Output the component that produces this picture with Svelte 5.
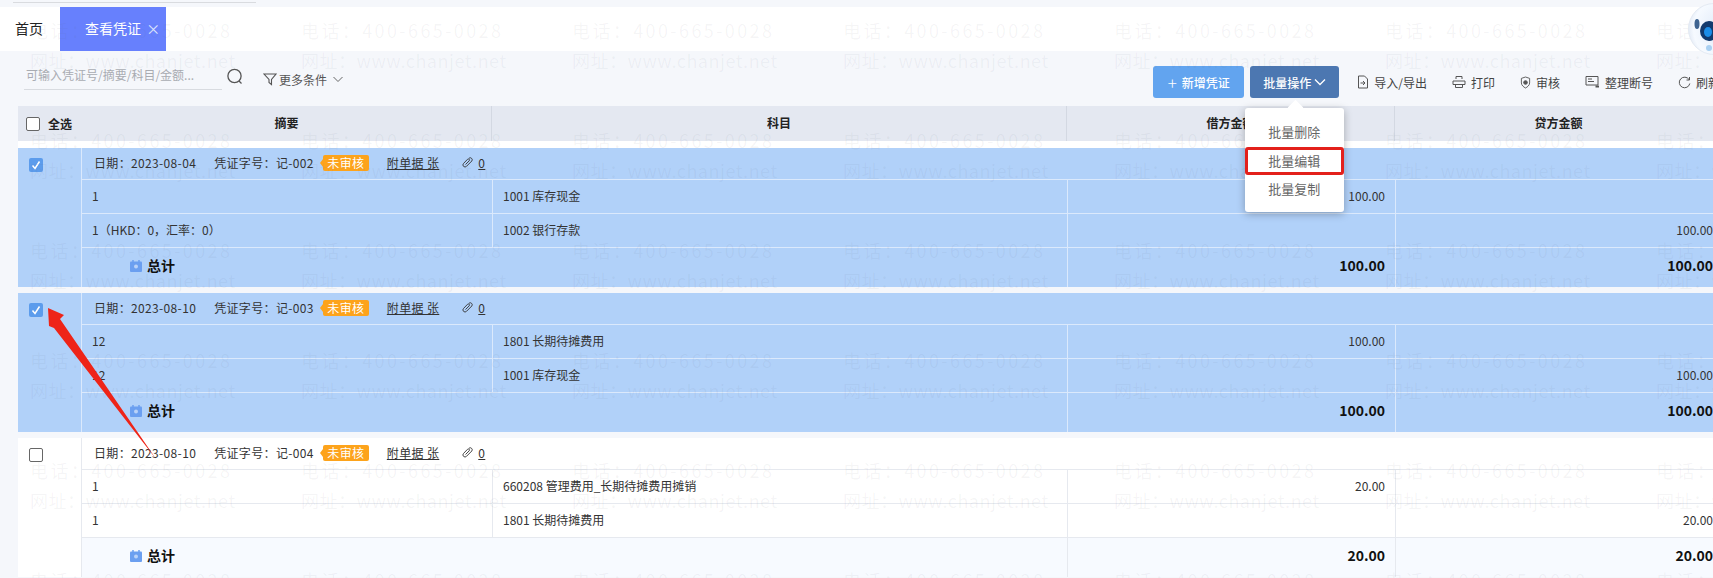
<script>
  const vouchers = [
    {
      date: '2023-08-04', no: '记-002', selected: true, total: '100.00',
      rows: [
        { memo: '1', account: '1001 库存现金', debit: '100.00', credit: '' },
        { memo: '1（HKD：0，汇率：0）', account: '1002 银行存款', debit: '', credit: '100.00' }
      ]
    },
    {
      date: '2023-08-10', no: '记-003', selected: true, total: '100.00',
      rows: [
        { memo: '12', account: '1801 长期待摊费用', debit: '100.00', credit: '' },
        { memo: '12', account: '1001 库存现金', debit: '', credit: '100.00' }
      ]
    },
    {
      date: '2023-08-10', no: '记-004', selected: false, total: '20.00',
      rows: [
        { memo: '1', account: '660208 管理费用_长期待摊费用摊销', debit: '20.00', credit: '' },
        { memo: '1', account: '1801 长期待摊费用', debit: '', credit: '20.00' }
      ]
    }
  ];

  const marks = Array.from({ length: 42 });
</script>

<div class="page">
  <div class="topstrip"><span class="topline"></span></div>

  <nav class="tabs">
    <span class="home">首页</span>
    <span class="tab-on">查看凭证 <i>×</i></span>
  </nav>

  <div class="toolbar">
    <div class="filters">
      <span class="search">可输入凭证号/摘要/科目/金额...</span>
      <svg class="search-icon" width="18" height="18" viewBox="0 0 18 18" fill="none" stroke="#555" stroke-width="1.3">
        <circle cx="8.5" cy="8" r="6.6" />
        <path d="M13 13l2.5 2.5" />
      </svg>
      <span class="more">
        <svg width="14" height="14" viewBox="0 0 14 14" fill="none" stroke="#555" stroke-width="1.1">
          <path d="M1 2h12L8.5 7.5V12.5L6 10.5V7.5z" />
        </svg>
        更多条件
        <svg class="chev" width="12" height="12" viewBox="0 0 12 12" fill="none" stroke="#666" stroke-width="1">
          <path d="M1.5 4l4.5 4.5L10.5 4" />
        </svg>
      </span>
    </div>

    <div class="actions">
      <button class="btn add"><span class="plus">+</span>新增凭证</button>
      <div class="batch">
        <button class="btn bulk">
          批量操作
          <svg width="12" height="12" viewBox="0 0 12 12" fill="none" stroke="#fff" stroke-width="1.3">
            <path d="M1 3.5l5 5 5-5" />
          </svg>
        </button>
        <div class="menu">
          <div class="menu-item">批量删除</div>
          <div class="menu-item marked">批量编辑</div>
          <div class="menu-item">批量复制</div>
        </div>
      </div>
      <span class="tool">
        <svg width="12" height="14" viewBox="0 0 12 14" fill="none" stroke="#555">
          <path d="M7.5 1H1.5v12h9V4z" /><path d="M3.5 8h4M6 6l2 2-2 2" />
        </svg>
        导入/导出
      </span>
      <span class="tool">
        <svg width="14" height="14" viewBox="0 0 14 14" fill="none" stroke="#555">
          <path d="M4 4V1.5h6V4M1 6h12v3.5H1zM3.5 9.5v3h7v-3" />
        </svg>
        打印
      </span>
      <span class="tool">
        <svg width="11" height="13" viewBox="0 0 12 14" fill="none" stroke="#555">
          <path d="M6 1l4.500 1.500v5C10.500 10 8 12 6 13 4 12 1.500 10 1.500 7.500v-5z" />
          <circle cx="6" cy="7" r="2" fill="#555" />
        </svg>
        审核
      </span>
      <span class="tool">
        <svg width="15" height="14" viewBox="0 0 15 14" fill="none" stroke="#555">
          <path d="M1 1.500h12v8.500H1zM3 4h4M3 6.500h6" /><path d="M10.500 11.500h3.500" stroke-width="2" />
        </svg>
        整理断号
      </span>
      <span class="tool">
        <svg width="13" height="13" viewBox="0 0 13 13" fill="none" stroke="#555">
          <path d="M11 3.500A5.300 5.300 0 1 0 11.800 7.500" /><path d="M11.500 1v3h-3" />
        </svg>
        刷新
      </span>
    </div>
  </div>

  <div class="table-head cols">
    <div class="all"><span class="check"></span>全选</div>
    <div class="th split">摘要</div>
    <div class="th split">科目</div>
    <div class="th split">借方金额</div>
    <div class="th">贷方金额</div>
  </div>

  <div class="list">
    {#each vouchers as v}
      <section class="voucher" class:selected={v.selected}>
        <div class="side">
          <span class="check" class:on={v.selected}>
            {#if v.selected}
              <svg width="14" height="14" viewBox="0 0 14 14" fill="none" stroke="#fff" stroke-width="1.500">
                <path d="M3.500 7.500l2.500 3 4.500-7" />
              </svg>
            {/if}
          </span>
        </div>
        <div class="body">
          <div class="meta">
            <span class="date">日期：{v.date}</span>
            <span class="no">凭证字号：{v.no}</span>
            <span class="badge">未审核</span>
            <span class="attach">附单据 张</span>
            <svg class="clip" width="11" height="11" viewBox="0 0 11 11" fill="none" stroke="#333" stroke-width="0.900">
              <path d="M7 1.200a2 2 0 0 1 2.800 2.800L4.500 9.300a2 2 0 0 1-3-2.800l4-4.200a1.100 1.100 0 0 1 1.700 1.500L3.500 7.500" />
            </svg>
            <span class="count">0</span>
          </div>
          {#each v.rows as r}
            <div class="row cols-body">
              <div class="cell">{r.memo}</div>
              <div class="cell">{r.account}</div>
              <div class="cell num">{r.debit}</div>
              <div class="cell num">{r.credit}</div>
            </div>
          {/each}
          <div class="row total cols-body">
            <div class="cell sum">
              <svg width="12" height="12" viewBox="0 0 12 12">
                <rect x="0" y="1.500" width="12" height="10.500" rx="1" fill="#6b9ff0" />
                <path d="M3 0v3M9 0v3" stroke="#6b9ff0" stroke-width="1.500" />
                <circle cx="6" cy="6.500" r="2" fill="#b9d2f8" />
              </svg>
              总计
            </div>
            <div class="cell"></div>
            <div class="cell num strong">{v.total}</div>
            <div class="cell num strong">{v.total}</div>
          </div>
        </div>
      </section>
    {/each}
  </div>

  <div class="watermark">
    {#each marks as _}
      <div class="mark">
        <span class="tel">电话：400-665-0028</span>
        <span>网址：www.chanjet.net</span>
      </div>
    {/each}
  </div>

  <svg class="robot" width="26" height="54" viewBox="0 0 26 54">
    <defs>
      <radialGradient id="glow" cx="0.7" cy="0.5" r="0.8">
        <stop offset="0" stop-color="#dce8f8" />
        <stop offset="0.75" stop-color="#f6faff" />
        <stop offset="1" stop-color="#d3deee" />
      </radialGradient>
    </defs>
    <circle cx="27" cy="27" r="25.500" fill="url(#glow)" stroke="#e4eaf3" />
    <ellipse cx="22" cy="29" rx="9" ry="10" fill="#123a6e" />
    <ellipse cx="21" cy="30" rx="4" ry="5" fill="#1b8de8" />
    <ellipse cx="10" cy="22" rx="2.500" ry="5" fill="#3f6491" />
    <circle cx="22" cy="46" r="3" fill="#a9d0f2" />
  </svg>

  <svg class="arrow" width="170" height="160" viewBox="40 305 170 160">
    <polygon points="48,308 64,315 60,319 156,459 54,328 49,326" fill="#ee2418" />
  </svg>
</div>

<style>
  :global(body) {
    margin: 0;
    background: #f5f7fb;
  }

  .page {
    position: relative;
    width: 1713px;
    height: 578px;
    overflow: hidden;
    background: #f5f7fb;
    font-family: "Noto Sans CJK SC", "Liberation Sans", sans-serif;
    font-size: 12px;
    color: #333;
  }

  .topstrip {
    height: 7px;
  }
  .topline {
    display: block;
    width: 243px;
    height: 1px;
    margin-left: 13px;
    background: #d9dbdf;
    transform: translateY(2px);
  }

  .tabs {
    display: flex;
    height: 44px;
    background: #fff;
    font-size: 14px;
  }
  .home {
    width: 60px;
    padding-left: 15px;
    box-sizing: border-box;
    line-height: 42px;
    color: #222;
  }
  .tab-on {
    width: 106px;
    padding-left: 25px;
    box-sizing: border-box;
    line-height: 42px;
    background: #6780fd;
    color: #fff;
  }
  .tab-on i {
    font-style: normal;
    margin-left: 2px;
    color: #dfe4ff;
  }

  .toolbar {
    display: flex;
    height: 55px;
  }
  .filters {
    flex: 1;
    display: flex;
    padding-left: 24px;
  }
  .search {
    width: 198px;
    height: 39px;
    box-sizing: border-box;
    padding: 15px 2px 0;
    line-height: 18px;
    border-bottom: 1px solid #d8dbe0;
    color: #a9acb2;
  }
  .search-icon {
    margin: 17px 0 0 4px;
  }
  .more {
    display: flex;
    align-items: center;
    gap: 2px;
    height: 20px;
    margin: 18px 0 0 19px;
    color: #555;
  }
  .chev {
    margin-left: 3px;
  }

  .actions {
    display: flex;
    flex: none;
    align-items: flex-start;
    padding-top: 15px;
    margin-right: -32px;
  }
  .btn {
    height: 32px;
    padding: 0;
    border: none;
    border-radius: 3px;
    color: #fff;
    font: inherit;
    font-weight: 500;
  }
  .add {
    display: flex;
    align-items: center;
    justify-content: center;
    gap: 5px;
    width: 91px;
    margin-right: 6px;
    background: #62a4ef;
  }
  .plus {
    font-size: 17px;
    font-weight: 300;
    line-height: 1;
  }
  .bulk {
    display: flex;
    align-items: center;
    justify-content: center;
    gap: 3px;
    width: 89px;
    background: #4c77b1;
  }
  .batch {
    position: relative;
    margin-right: 18px;
  }
  .menu {
    position: absolute;
    z-index: 10;
    top: 42px;
    left: -5px;
    width: 99px;
    height: 104px;
    box-sizing: border-box;
    padding-top: 10px;
    background: #fff;
    border-radius: 3px;
    box-shadow: 0 2px 8px rgba(0, 0, 0, 0.28);
    font-size: 13px;
    color: #666;
  }
  .menu::before {
    content: "";
    position: absolute;
    top: -6px;
    left: 45px;
    width: 11px;
    height: 11px;
    background: #fff;
    transform: rotate(45deg);
  }
  .menu-item {
    position: relative;
    height: 28.5px;
    line-height: 28px;
    padding-left: 23px;
  }
  .marked {
    outline: 3px solid #e3201b;
    outline-offset: -3px;
    border-radius: 3px;
  }
  .tool {
    display: flex;
    align-items: center;
    gap: 5px;
    height: 32px;
    margin-right: 25px;
    color: #444;
    white-space: nowrap;
  }

  .cols,
  .cols-body {
    display: grid;
  }
  .cols {
    grid-template-columns: 64px 410px 575px 328px 327px;
  }
  .cols-body {
    grid-template-columns: 411px 575px 328px 327px;
  }

  .table-head {
    width: 1704px;
    height: 35px;
    margin-left: 18px;
    background: #e4e8f1;
    border-bottom: 7px solid #fff;
    font-weight: 700;
    color: #222;
    line-height: 33px;
  }
  .all {
    display: flex;
    align-items: center;
    gap: 8px;
    padding-left: 8px;
  }
  .th {
    text-align: center;
  }
  .split {
    border-right: 1px solid #d3d8e2;
  }

  .voucher {
    display: grid;
    grid-template-columns: 64px 1fr;
    width: 1704px;
    margin: 0 0 6px 18px;
    background: #fff;
    --line: #e6e9ef;
  }
  .voucher.selected {
    background: #b1d1f9;
    --line: #dbe9fc;
  }
  .side {
    padding: 10px 0 0 11px;
    border-right: 1px solid var(--line);
  }
  .check {
    display: block;
    width: 14px;
    height: 14px;
    box-sizing: border-box;
    border: 1px solid #666;
    border-radius: 2px;
    background: #fff;
  }
  .check.on {
    border: none;
    background: #5c9cec;
  }
  .side .check svg {
    display: block;
  }

  .meta {
    display: flex;
    align-items: center;
    height: 29px;
    padding: 0 0 2px 12px;
    white-space: nowrap;
    letter-spacing: 0.35px;
  }
  .no {
    margin-left: 18px;
  }
  .badge {
    position: relative;
    width: 46px;
    height: 16px;
    margin-left: 9px;
    border-radius: 2px;
    background: #fda31b;
    color: #fff;
    text-align: center;
    line-height: 15px;
  }
  .badge::before {
    content: "";
    position: absolute;
    top: 4px;
    left: -3px;
    border: 4px solid transparent;
    border-left: none;
    border-right: 3px solid #fda31b;
  }
  .attach {
    margin-left: 18px;
    text-decoration: underline;
  }
  .clip {
    margin-left: 23px;
  }
  .count {
    margin-left: 5px;
    text-decoration: underline;
  }

  .row {
    height: 34px;
    box-sizing: border-box;
    border-top: 1px solid var(--line);
  }
  .cell {
    padding: 0 10px;
    line-height: 32px;
    border-right: 1px solid var(--line);
  }
  .cell:last-child {
    border-right: none;
  }
  .num {
    text-align: right;
  }
  .total {
    height: 40px;
    color: #111;
  }
  .voucher:not(.selected) .total {
    background: #f7faff;
  }
  .total .cell {
    line-height: 35px;
  }
  .total .sum {
    border-right-color: transparent;
  }
  .sum {
    display: flex;
    align-items: center;
    gap: 5px;
    height: 35px;
    padding-left: 48px;
    font-size: 14px;
    font-weight: 700;
  }
  .strong {
    font-size: 14px;
    font-weight: 700;
  }

  .watermark {
    position: absolute;
    z-index: 5;
    top: 15px;
    left: 30px;
    display: grid;
    grid-template-columns: repeat(7, 271px);
    grid-auto-rows: 110px;
    pointer-events: none;
  }
  .mark {
    display: flex;
    flex-direction: column;
    font-size: 18px;
    line-height: 30px;
    letter-spacing: 0.5px;
    color: rgba(95, 105, 125, 0.065);
    white-space: nowrap;
  }
  .tel {
    letter-spacing: 2.4px;
  }

  .robot {
    position: absolute;
    z-index: 6;
    top: 2px;
    right: 0;
  }
  .arrow {
    position: absolute;
    z-index: 7;
    top: 305px;
    left: 40px;
  }
</style>
